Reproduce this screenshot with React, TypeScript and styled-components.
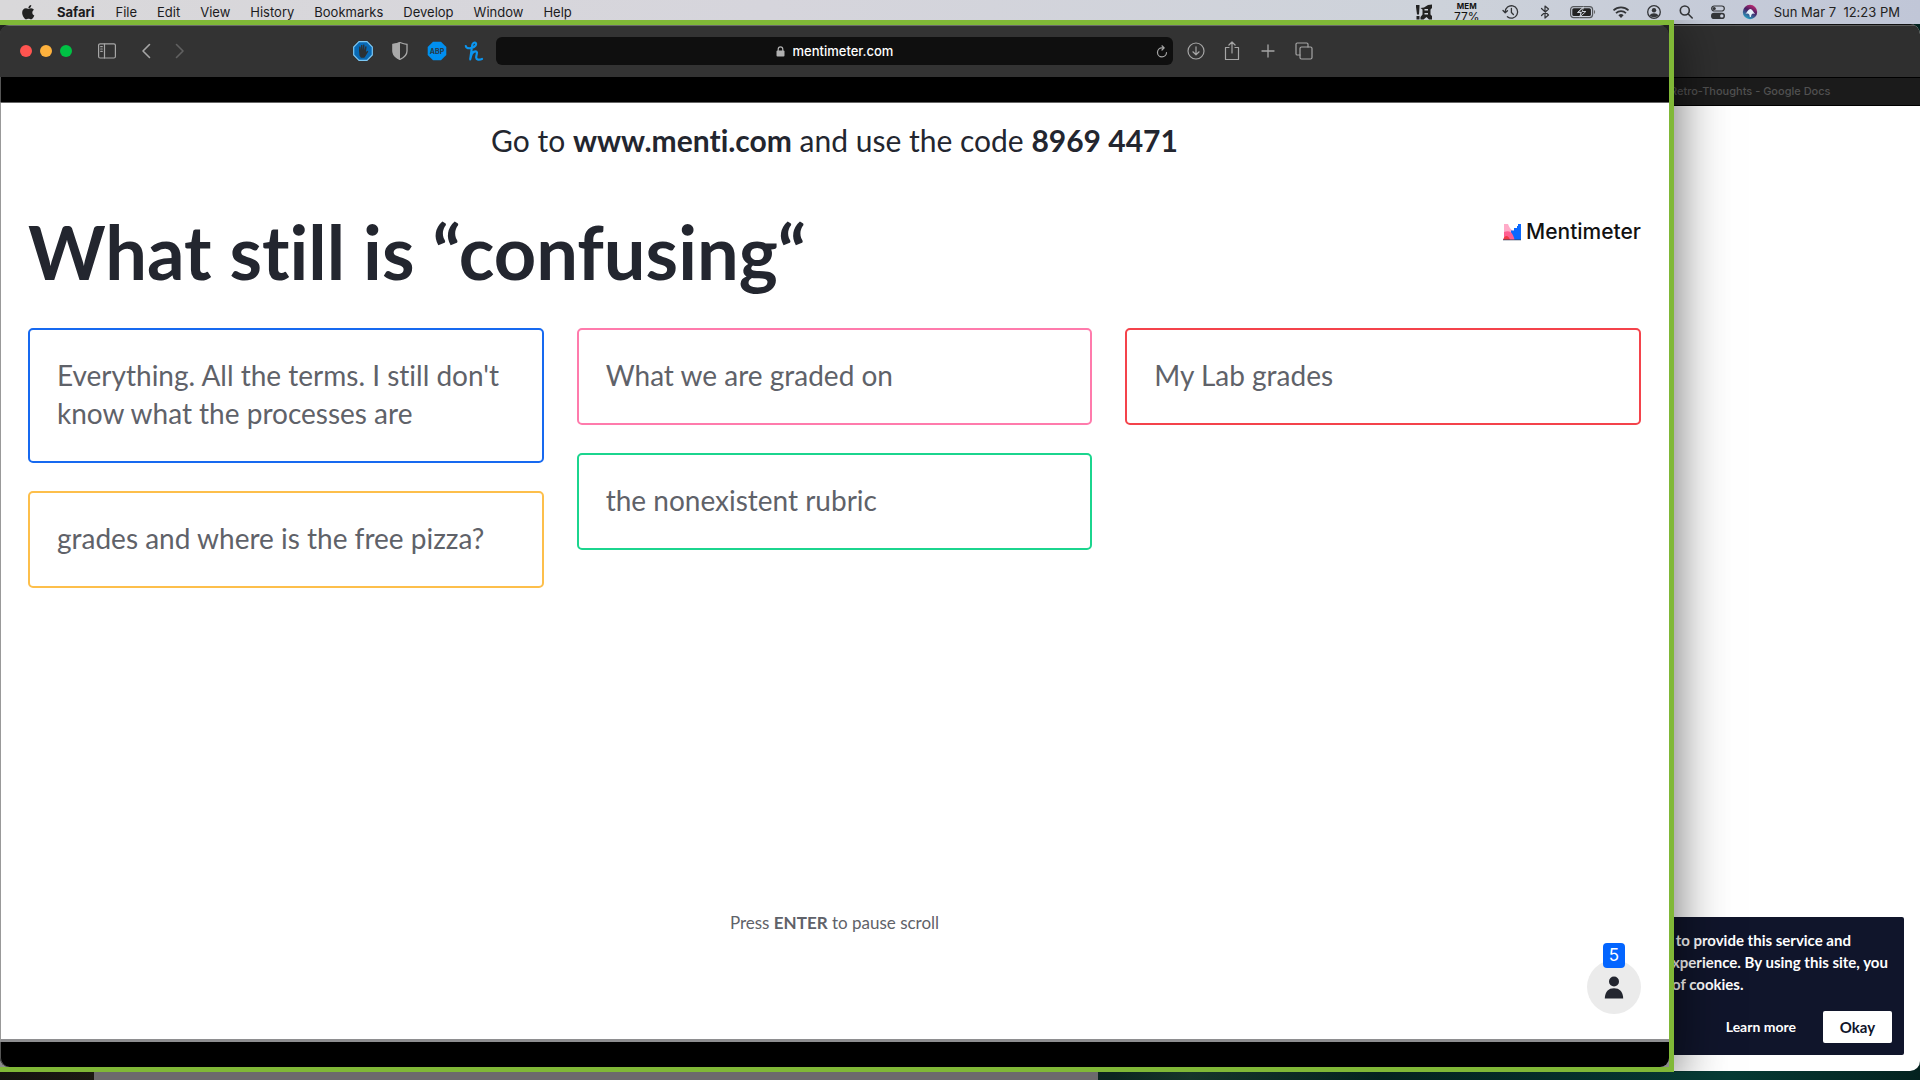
import React from "react";
import styled, { createGlobalStyle } from "styled-components";

const ui = `Inter, "Liberation Sans", sans-serif`;
const brand = `Lato, "Open Sans", sans-serif`;

const GlobalStyle = createGlobalStyle`
  *, *::before, *::after { box-sizing: border-box; }
  html, body { margin: 0; height: 100%; }
  body { font-family: ${ui}; overflow: hidden; font-variant-ligatures: none; }
  button, input { font: inherit; color: inherit; border: 0; padding: 0; margin: 0; background: none; }
  svg { display: block; }
`;

/* ---------- desktop ---------- */

const Desktop = styled.div`
  position: relative;
  height: 100vh;
  overflow: hidden;
  background: linear-gradient(90deg, #15130f 0, #1c1a12 5%, #0b0c0a 6%, #0c2620 58%, #16352a 62%, #04231f 72%, #063a34 90%, #04221f 100%);
`;

const MenuBar = styled.header`
  height: 24px;
  display: flex;
  align-items: center;
  justify-content: space-between;
  padding: 0 20px;
  font-size: 13px;
  color: #1b1b1d;
  background: linear-gradient(90deg, #d9d8da 0, #d6d5dc 40%, #cdd2da 75%, #c0c6d7 100%);
`;

const MenuList = styled.nav`
  display: flex;
  align-items: center;
  gap: 20px;
`;

const MenuItem = styled.button<{ $strong?: boolean }>`
  padding: ${(p) => (p.$strong ? "0 1px" : "0")};
  font-weight: ${(p) => (p.$strong ? 700 : 400)};
  line-height: 20px;
`;

const StatusList = styled.div`
  display: flex;
  align-items: center;
  gap: 16px;
  color: #333538;
`;

const Memory = styled.div`
  width: 38px;
  display: flex;
  flex-direction: column;
  align-items: center;
  color: #111;
  font-size: 12px;
  line-height: 13px;
`;

const MemoryLabel = styled.span`
  font-size: 8px;
  line-height: 8px;
  font-weight: 700;
`;

const Clock = styled.time`
  white-space: pre;
  color: #222;
`;

/* ---------- windows behind ---------- */

const HiddenWindow = styled.div`
  position: absolute;
  left: 94px;
  right: 822px;
  bottom: 0;
  height: 40px;
  background: #6c6a6c;
`;

const BackWindow = styled.section`
  position: absolute;
  top: 24px;
  right: 0;
  bottom: 9px;
  width: 300px;
  display: flex;
  flex-direction: column;
  overflow: hidden;
  background: #fff;
  border-radius: 10px;
`;

const BackToolbar = styled.div`
  height: 54px;
  background: #2f2f2f;
  border-top: 1px solid #111;
  border-bottom: 1px solid #000;
  box-shadow: inset 0 1px #5c5c5c;
`;

const BackTab = styled.div`
  height: 28px;
  padding-left: 50px;
  background: #1b1b1b;
  border-bottom: 1px solid #000;
  color: #515151;
  font-size: 11px;
  font-weight: 500;
  line-height: 27px;
`;

const BackPage = styled.div`
  flex: 1;
  display: flex;
  align-items: flex-end;
  padding: 0 16px 16px 0;
`;

const CookieNotice = styled.aside`
  flex: 1;
  min-width: 0;
  padding: 12px 12px 12px 52px;
  border-radius: 2px;
  background: #10152b;
  color: #fff;
  font-family: ${brand};
  font-size: 15px;
  font-weight: 700;
  line-height: 22px;
`;

const CookieText = styled.p`
  margin: 0;
  white-space: pre;
`;

const CookieActions = styled.div`
  display: flex;
  justify-content: flex-end;
  align-items: center;
  gap: 27px;
  margin-top: 16px;
  font-size: 14px;
  line-height: 32px;
`;

const LearnMore = styled.a`
  color: #fff;
  text-decoration: none;
`;

const OkayButton = styled.button`
  width: 69px;
  height: 32px;
  border-radius: 2px;
  background: #fff;
  color: #10152b;
  font-size: 15px;
`;

/* ---------- shared window ---------- */

const SharedFrame = styled.main`
  position: absolute;
  top: 20px;
  left: 0;
  right: 246px;
  bottom: 8px;
  display: flex;
  border: solid #80b837;
  border-width: 5px 5px 5px 0;
  background: linear-gradient(#222 50%, #8b8b8b 50%);
  box-shadow: 0 10px 50px rgba(0, 0, 0, 0.6);
  clip-path: inset(0 -80px 0 0);
`;

const Browser = styled.div`
  flex: 1;
  min-width: 0;
  display: flex;
  flex-direction: column;
  overflow: hidden;
  background: #000;
  border-radius: 9px;
  box-shadow: inset 1px 0 #555;
`;

const Toolbar = styled.div`
  height: 52px;
  display: grid;
  grid-template-columns: minmax(0, 1fr) minmax(0, 677px) minmax(0, 1fr);
  align-items: center;
  background: #333;
  box-shadow: inset 0 1px #6a6a6a;
  color: #a6a6a6;
`;

const ToolbarLeft = styled.div`
  display: flex;
  align-items: center;
  justify-content: space-between;
  padding: 0 12px 0 20px;
`;

const Cluster = styled.div<{ $gap: number }>`
  display: flex;
  align-items: center;
  gap: ${(p) => p.$gap}px;
`;

const Light = styled.button<{ $color: string }>`
  width: 12px;
  height: 12px;
  border-radius: 50%;
  background: ${(p) => p.$color};
`;

const IconButton = styled.button<{ $dim?: boolean }>`
  display: flex;
  justify-content: center;
  width: 20px;
  opacity: ${(p) => (p.$dim ? 0.4 : 1)};
`;

const AddressBar = styled.form`
  height: 28px;
  display: grid;
  grid-template-columns: 18px 1fr 18px;
  align-items: center;
  padding: 0 3px;
  border-radius: 6px;
  background: #0f0f0f;
`;

const AddressLabel = styled.label`
  grid-column: 2;
  display: flex;
  justify-content: center;
  align-items: center;
  gap: 8px;
`;

const AddressInput = styled.input`
  width: 101px;
  color: #fff;
  font-size: 13px;
  font-weight: 500;
  outline: none;
`;

const ToolbarRight = styled.div`
  display: flex;
  align-items: center;
  gap: 16px;
  padding-left: 13px;
`;

const Slide = styled.div`
  flex: 1;
  min-height: 0;
  display: flex;
  flex-direction: column;
  margin: 25px 0;
  padding: 0 28px 25px 27px;
  background: #fff;
  border-top: 1px solid #666;
  border-bottom: 3px solid #8e8e90;
  border-left: 1px solid #999;
  color: #23262f;
  font-family: ${brand};
`;

const JoinLine = styled.p`
  margin: 17px 0 0;
  text-align: center;
  font-size: 30px;
  line-height: 40px;
`;

const TitleRow = styled.div`
  display: flex;
  justify-content: space-between;
  align-items: flex-start;
  margin-top: 46px;
`;

const Title = styled.h1`
  margin: 0;
  font-size: 74px;
  font-weight: 700;
  line-height: 92px;
`;

const Logo = styled.div`
  display: flex;
  align-items: center;
  gap: 5px;
  margin-top: 13px;
  color: #111;
  font-family: ${ui};
  font-size: 21px;
  font-weight: 500;
  line-height: 26px;
`;

const Columns = styled.div`
  display: grid;
  grid-template-columns: repeat(3, minmax(0, 1fr));
  gap: 33px;
  margin-top: 30px;
`;

const Column = styled.ul`
  display: flex;
  flex-direction: column;
  gap: 28px;
  margin: 0;
  padding: 0;
  list-style: none;
`;

const Answer = styled.li<{ $color: string }>`
  padding: 26px 27px 29px;
  border: 2px solid ${(p) => p.$color};
  border-radius: 5px;
  color: #5f6269;
  font-size: 28px;
  line-height: 38px;
`;

const SlideFooter = styled.footer`
  flex: 1;
  display: grid;
  grid-template-columns: 1fr auto 1fr;
  align-items: end;
`;

const Hint = styled.p`
  grid-column: 2;
  margin: 0 0 80px;
  color: #5f6269;
  font-size: 17px;
  line-height: 22px;
`;

const Voters = styled.div`
  position: relative;
  justify-self: end;
  width: 54px;
  height: 54px;
  display: flex;
  justify-content: center;
  align-items: center;
  border-radius: 50%;
  background: #ebebeb;
`;

const VoterCount = styled.span`
  position: absolute;
  top: -17px;
  left: 16px;
  width: 22px;
  height: 25px;
  border-radius: 4px;
  background: #0365ff;
  color: #fff;
  font-family: ${ui};
  font-size: 17px;
  line-height: 25px;
  text-align: center;
`;

/* ---------- icons ---------- */

const stroke = { fill: "none", stroke: "currentColor", strokeLinecap: "round", strokeLinejoin: "round" } as const;

const Apple = () => (
  <svg width="16" height="17" viewBox="0 0 24 24" fill="#222">
    <path d="M17.05 20.28c-.98.95-2.05.8-3.08.35-1.09-.46-2.09-.48-3.24 0-1.44.62-2.2.44-3.06-.35C2.79 15.25 3.51 7.59 9.05 7.31c1.35.07 2.29.74 3.08.8 1.18-.24 2.31-.93 3.57-.84 1.51.12 2.65.72 3.4 1.8-3.12 1.87-2.38 5.98.48 7.13-.57 1.5-1.31 2.99-2.54 4.09zM12.03 7.25C11.88 5.02 13.69 3.18 15.77 3c.29 2.58-2.34 4.5-3.74 4.25z" transform="translate(-2 -3) scale(1.2)" />
  </svg>
);

const StatusTool = () => (
  <svg width="16" height="16" viewBox="0 0 16 16" fill="#222">
    <path d="M0 1h3.500v2L3 10.500H1L0 3zM.5 12h3v3.500h-3zM4.500 4l3.500-.5L12 1l4-.5V4l-1.500 1.500v5L16 12v3.500h-3L10.500 13l-3 2.500h-3V13l2-2.500v-5z" />
    <path d="M8.500 5h3.500v1.500H8.500zM8.500 9h3.500v1.500H8.500z" fill="#cdd2da" />
  </svg>
);

const TimeMachine = () => (
  <svg width="18" height="16" viewBox="0 0 18 16" {...stroke} strokeWidth="1.300">
    <path d="M3.200 8a6.200 6.200 0 1 1 2.200 4.700M1 6.500l2.200 2.300L5.500 6.700M9.400 4.500V8.500l2 2" />
  </svg>
);

const Bluetooth = () => (
  <svg width="18" height="16" viewBox="0 0 18 16" {...stroke} strokeWidth="1.200">
    <path d="M5.500 4.500l7 6.500L9 14V2l3.500 3-7 6.500" />
  </svg>
);

const Battery = () => (
  <svg width="26" height="14" viewBox="0 0 26 14">
    <rect x="0.600" y="1.600" width="22" height="11" rx="3" fill="none" stroke="#55585c" strokeWidth="1.200" />
    <rect x="2.300" y="3.300" width="18.600" height="7.600" rx="1.500" fill="#222" />
    <path d="M13.500 2l-6 5.500h3.500L9.800 12l6-5.500h-3.600z" fill="#cdd2da" stroke="#cdd2da" />
    <path d="M13 3.500l-4 3.300h3l-1.200 3.700 4-3.500h-3z" fill="#222" />
    <path d="M24 5v4c1.500-.5 1.500-3.500 0-4z" fill="#666" />
  </svg>
);

const Wifi = () => (
  <svg width="18" height="14" viewBox="0 0 18 14" {...stroke} strokeWidth="1.700" strokeLinecap="butt">
    <path d="M1.500 5.300a11 11 0 0 1 15 0M4 8.100a7.300 7.300 0 0 1 10 0" />
    <path d="M6.400 10.300a3.800 3.800 0 0 1 5.200 0L9 13z" fill="currentColor" stroke="none" />
  </svg>
);

const Account = () => (
  <svg width="16" height="16" viewBox="0 0 16 16">
    <circle cx="8" cy="8" r="6.300" fill="none" stroke="currentColor" strokeWidth="1.300" />
    <circle cx="8" cy="6.300" r="2.200" fill="currentColor" />
    <path d="M3.800 11.500c1-3 7.400-3 8.400 0-1.700 2.300-6.700 2.300-8.400 0z" fill="currentColor" />
  </svg>
);

const Search = () => (
  <svg width="16" height="16" viewBox="0 0 16 16" {...stroke} strokeWidth="1.600">
    <circle cx="6.800" cy="6.500" r="4.500" />
    <path d="M10.200 10l4 4" />
  </svg>
);

const ControlCenter = () => (
  <svg width="16" height="16" viewBox="0 0 16 16">
    <rect x="1.700" y="2" width="12.600" height="5" rx="2.500" fill="none" stroke="currentColor" strokeWidth="1.200" />
    <circle cx="4.200" cy="4.500" r="1.600" fill="currentColor" />
    <rect x="1" y="8.800" width="14" height="6.200" rx="3.100" fill="currentColor" />
    <circle cx="11.800" cy="11.900" r="1.700" fill="#c8cddb" />
  </svg>
);

const Siri = () => (
  <svg width="16" height="16" viewBox="0 0 16 16">
    <defs>
      <linearGradient id="siri" x1="0.800" y1="0" x2="0.300" y2="1">
        <stop offset="0" stopColor="#d12c72" />
        <stop offset="0.450" stopColor="#4a1e63" />
        <stop offset="1" stopColor="#22a9c9" />
      </linearGradient>
    </defs>
    <circle cx="8" cy="8" r="7.200" fill="url(#siri)" />
    <path d="M3.500 10C5 8 6.500 5 8.300 5S11.500 8 13 10C11 9 9.500 9 8.800 13h-1C7.500 9.500 6 9 3.500 10z" fill="#e8f3fb" />
  </svg>
);

const Sidebar = () => (
  <svg width="18" height="16" viewBox="0 0 18 16" {...stroke} strokeWidth="1.200">
    <rect x="0.600" y="0.800" width="16.800" height="14.200" rx="1.500" />
    <path d="M6.500 1v14M2.700 3.700h1.600M2.700 6h1.600M2.700 8.300h1.600" />
  </svg>
);

const Chevron = ({ flip }: { flip?: boolean }) => (
  <svg width="10" height="16" viewBox="0 0 10 16" {...stroke} strokeWidth="1.600">
    <path d={flip ? "M1.500 1.500L8 8l-6.500 6.500" : "M8.500 1.500L2 8l6.500 6.500"} />
  </svg>
);

const octagon = "M6 .7h8L19.300 6v8L14 19.300H6L.7 14V6z";

const HandBlocker = () => (
  <svg width="20" height="20" viewBox="0 0 20 20">
    <path d={octagon} fill="#0769b5" stroke="#7cc8f5" strokeWidth="1.200" />
    <path d="M6 9.500l.3-4 1.200.2.300 3.300.3-5 1.300.1.200 4.800.6-5.400 1.200.2v5.500l1-4 1.200.3-.6 5.500 1.300-1.200 1 .7-2.700 4.500-1.300 1.800H8l-1.500-2z" fill="#2b3135" />
  </svg>
);

const Shield = () => (
  <svg width="20" height="20" viewBox="0 0 20 20">
    <path d="M10 1.500c2.500 1 4.800 1.700 7 1.900v6.600c0 4-3.200 6.700-7 8.300-3.800-1.600-7-4.300-7-8.300V3.400c2.200-.2 4.500-.9 7-1.900z" fill="#333" stroke="#a9a9a9" strokeWidth="1.300" />
    <path d="M10 1v18c-4-1.700-7.500-4.500-7.500-9V3C5 2.800 7.500 2 10 1z" fill="#a9a9a9" />
  </svg>
);

const Abp = () => (
  <svg width="20" height="20" viewBox="0 0 20 20">
    <path d={octagon} fill="#008fef" />
    <text x="10" y="12.500" textAnchor="middle" fontFamily="Inter, sans-serif" fontWeight="700" fontSize="7" fill="#263947">ABP</text>
  </svg>
);

const Honey = () => (
  <svg width="20" height="20" viewBox="0 0 20 20" {...stroke} stroke="#0c95ee" strokeWidth="2.200">
    <path d="M1.800 5c.2 2.200 3 2.700 6 1.900 3.300-.9 4.800-3.200 4.100-4.600-.7-1.300-3.200-1-3.700 2L6.200 18.300c.8-4.500 3-8 5.200-8 3 0 .6 4 .8 6.300.2 2.200 3 2.600 5.800 1.400" />
  </svg>
);

const Lock = () => (
  <svg width="9" height="11" viewBox="0 0 9 11">
    <rect x="0.500" y="4.500" width="8" height="6" rx="1" fill="#b0b0b0" />
    <path d="M2.200 5V3.200a2.300 2.300 0 0 1 4.600 0V5" fill="none" stroke="#b0b0b0" strokeWidth="1.200" />
  </svg>
);

const Reload = () => (
  <svg width="12" height="13" viewBox="0 0 12 13" {...stroke} strokeWidth="1.200">
    <path d="M10.500 7.500a4.500 4.500 0 1 1-4.500-4.600h2M6 .8l2.200 2.100L6 5" />
  </svg>
);

const Download = () => (
  <svg width="18" height="18" viewBox="0 0 18 18" {...stroke} strokeWidth="1.200">
    <circle cx="9" cy="9" r="8" />
    <path d="M9 4.800v7.800M5.900 9.800L9 12.800l3.100-3" />
  </svg>
);

const Share = () => (
  <svg width="16" height="20" viewBox="0 0 16 20" {...stroke} strokeWidth="1.200">
    <path d="M5 6.500H1.500V18.500h13V6.500H11M8 12V1.200M4.900 4L8 1l3.100 3" />
  </svg>
);

const Plus = () => (
  <svg width="14" height="14" viewBox="0 0 14 14" {...stroke} strokeWidth="1.300">
    <path d="M7 1v12M1 7h12" />
  </svg>
);

const Tabs = () => (
  <svg width="18" height="18" viewBox="0 0 18 18" {...stroke} strokeWidth="1.200">
    <rect x="5" y="5" width="12" height="12" rx="1.500" />
    <path d="M5 13H2.300C1.500 13 1 12.500 1 11.700V2.300C1 1.500 1.500 1 2.300 1h9.400c.8 0 1.300.5 1.300 1.300V5" />
  </svg>
);

const MentiMark = () => (
  <svg width="18" height="17" viewBox="0 0 18 17">
    <path d="M1 0h4c1 3 2.500 5 5 7v9H1z" fill="#ffabc8" />
    <path d="M18 0v16h-8L8 8.500V6.500h3V4h3V2h1V0z" fill="#0a68ff" />
    <path d="M1 8c3-1 5-1 7 .5 2 2 3 4.500 3.500 7.500H1z" fill="#ff5f92" />
    <path d="M0 16c1-3 2-4 3.500-4S6 13 7 16z" fill="#f23a45" />
    <path d="M0 15.500h18v.800H0z" fill="#31415e" />
  </svg>
);

const Person = () => (
  <svg width="20" height="23" viewBox="0 0 20 23" fill="#23262f">
    <circle cx="10" cy="5.500" r="5" />
    <path d="M.8 22.500C1 15.500 4.500 12.300 10 12.300s9 3.200 9.200 10.200z" />
  </svg>
);

/* ---------- content ---------- */

const menus = ["File", "Edit", "View", "History", "Bookmarks", "Develop", "Window", "Help"];

const answers = [
  [
    { text: "Everything. All the terms. I still don't know what the processes are", color: "#1769f0" },
    { text: "grades and where is the free pizza?", color: "#fdbf4b" },
  ],
  [
    { text: "What we are graded on", color: "#ff7bac" },
    { text: "the nonexistent rubric", color: "#1bd58e" },
  ],
  [{ text: "My Lab grades", color: "#f4434b" }],
];

export default function App() {
  return (
    <>
      <GlobalStyle />
      <Desktop>
        <MenuBar>
          <MenuList aria-label="Menu bar">
            <MenuItem aria-label="Apple menu"><Apple /></MenuItem>
            <MenuItem $strong>Safari</MenuItem>
            {menus.map((name) => (
              <MenuItem key={name}>{name}</MenuItem>
            ))}
          </MenuList>
          <StatusList>
            <StatusTool />
            <Memory>
              <MemoryLabel>MEM</MemoryLabel>
              <span>77%</span>
            </Memory>
            <TimeMachine />
            <Bluetooth />
            <Battery />
            <Wifi />
            <Account />
            <Search />
            <ControlCenter />
            <Siri />
            <Clock>{"Sun Mar 7  12:23 PM"}</Clock>
          </StatusList>
        </MenuBar>

        <HiddenWindow />

        <BackWindow>
          <BackToolbar />
          <BackTab>Retro-Thoughts - Google Docs</BackTab>
          <BackPage>
            <CookieNotice>
              <CookieText>{" to provide this service and\nxperience. By using this site, you\nof cookies."}</CookieText>
              <CookieActions>
                <LearnMore href="#">Learn more</LearnMore>
                <OkayButton>Okay</OkayButton>
              </CookieActions>
            </CookieNotice>
          </BackPage>
        </BackWindow>

        <SharedFrame>
          <Browser>
            <Toolbar>
              <ToolbarLeft>
                <Cluster $gap={25}>
                  <Cluster $gap={8}>
                    <Light $color="#ff5450" aria-label="Close" />
                    <Light $color="#fdb13d" aria-label="Minimize" />
                    <Light $color="#00c244" aria-label="Zoom" />
                  </Cluster>
                  <Cluster $gap={19}>
                    <IconButton aria-label="Show sidebar"><Sidebar /></IconButton>
                    <Cluster $gap={14}>
                      <IconButton aria-label="Back"><Chevron /></IconButton>
                      <IconButton aria-label="Forward" $dim><Chevron flip /></IconButton>
                    </Cluster>
                  </Cluster>
                </Cluster>
                <Cluster $gap={17}>
                  <IconButton aria-label="Ad blocker"><HandBlocker /></IconButton>
                  <IconButton aria-label="Privacy report"><Shield /></IconButton>
                  <IconButton aria-label="Adblock Plus"><Abp /></IconButton>
                  <IconButton aria-label="Honey"><Honey /></IconButton>
                </Cluster>
              </ToolbarLeft>
              <AddressBar>
                <AddressLabel>
                  <Lock />
                  <AddressInput aria-label="Address" defaultValue="mentimeter.com" />
                </AddressLabel>
                <IconButton type="button" aria-label="Reload"><Reload /></IconButton>
              </AddressBar>
              <ToolbarRight>
                <IconButton aria-label="Downloads"><Download /></IconButton>
                <IconButton aria-label="Share"><Share /></IconButton>
                <IconButton aria-label="New tab"><Plus /></IconButton>
                <IconButton aria-label="Tab overview"><Tabs /></IconButton>
              </ToolbarRight>
            </Toolbar>

            <Slide>
              <JoinLine>
                Go to <strong>www.menti.com</strong> and use the code <strong>8969 4471</strong>
              </JoinLine>
              <TitleRow>
                <Title>What still is “confusing“</Title>
                <Logo><MentiMark />Mentimeter</Logo>
              </TitleRow>
              <Columns>
                {answers.map((column, i) => (
                  <Column key={i}>
                    {column.map((a) => (
                      <Answer key={a.text} $color={a.color}>{a.text}</Answer>
                    ))}
                  </Column>
                ))}
              </Columns>
              <SlideFooter>
                <Hint>Press <strong>ENTER</strong> to pause scroll</Hint>
                <Voters>
                  <Person />
                  <VoterCount>5</VoterCount>
                </Voters>
              </SlideFooter>
            </Slide>
          </Browser>
        </SharedFrame>
      </Desktop>
    </>
  );
}
